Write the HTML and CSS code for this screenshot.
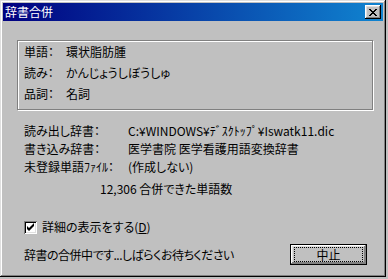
FILE: index.html
```html
<!DOCTYPE html>
<html>
<head>
    <meta charset="utf-8">
    <title>辞書合併</title>
    <link rel="stylesheet" href="styles.css">
</head>
<body>
    <div class="window">
        <div class="titlebar">
            <span class="title">辞書合併</span>
            <div class="close-button">
                <svg width="8" height="7" viewBox="0 0 8 7">
                    <path d="M0 0h2v1h1v1h2v-1h1v-1h2v1h-1v1h-1v1h-1v1h1v1h1v1h1v1h-2v-1h-1v-1h-2v1h-1v1h-2v-1h1v-1h1v-1h1v-1h-1v-1h-1v-1h-1z" fill="#000"/>
                </svg>
            </div>
        </div>
        <div class="content">
            <div class="group-box">
                <div class="row"><span class="key">単語：</span><span>環状脂肪腫</span></div>
                <div class="row"><span class="key">読み：</span><span>かんじょうしぼうしゅ</span></div>
                <div class="row"><span class="key">品詞：</span><span>名詞</span></div>
            </div>
            <div class="info">
                <div class="line"><span class="label">読み出し辞書：</span><span>C:¥WINDOWS¥ﾃﾞｽｸﾄｯﾌﾟ¥Iswatk11.dic</span></div>
                <div class="line"><span class="label">書き込み辞書：</span><span>医学書院 医学看護用語変換辞書</span></div>
                <div class="line"><span class="label">未登録単語ﾌｧｲﾙ：</span><span>(作成しない)</span></div>
                <div class="line count">12,306 合併できた単語数</div>
                <label class="check-row">
                    <span class="checkbox">
                        <svg width="9" height="9" viewBox="0 0 9 9">
                            <path d="M1 3v3l2 2 5-5v-3l-5 5z" fill="#000"/>
                        </svg>
                    </span>
                    <span>詳細の表示をする(<u>D</u>)</span>
                </label>
            </div>
            <div class="bottom-row">
                <span class="status">辞書の合併中です...しばらくお待ちください</span>
                <button class="push-button"><span class="focus">中止</span></button>
            </div>
        </div>
    </div>
</body>
</html>
```

FILE: styles.css
```css
body {
    margin: 0;
    background-color: #c0c0c0;
    font-family: "Noto Sans CJK JP", "DejaVu Sans", sans-serif;
    font-size: 12px;
    font-feature-settings: "palt";
    color: #000;
}
.window {
    width: 386px;
    height: 277px;
    box-sizing: border-box;
    padding: 3px;
    background-color: #c0c0c0;
    box-shadow: inset -1px -1px #000, inset 1px 1px #dfdfdf, inset -2px -2px #808080, inset 2px 2px #fff;
}
.titlebar {
    height: 18px;
    display: flex;
    align-items: center;
    justify-content: space-between;
    padding: 0 2px 0 2px;
    background: linear-gradient(to right, #000080, #1084d0);
    color: #fff;
}
.title {
    font-size: 12px;
    line-height: 18px;
}
.close-button {
    width: 16px;
    height: 14px;
    box-sizing: border-box;
    display: flex;
    align-items: center;
    justify-content: center;
    background-color: #c0c0c0;
    box-shadow: inset -1px -1px #000, inset 1px 1px #fff, inset -2px -2px #808080, inset 2px 2px #dfdfdf;
}
.content {
    padding: 19px 10px 0 14px;
}
.group-box {
    width: 356px;
    box-sizing: border-box;
    border: 1px solid #808080;
    box-shadow: inset 1px 1px #fff, 1px 1px #fff;
    padding: 0 0 5px 6px;
}
.row {
    display: flex;
    line-height: 21px;
}
.key {
    width: 42px;
}
.info {
    margin-top: 12px;
    padding-left: 7px;
}
.line {
    display: flex;
    line-height: 18px;
}
.label {
    width: 104px;
}
.count {
    margin-top: 4px;
    padding-left: 76px;
}
.check-row {
    display: flex;
    align-items: center;
    gap: 5px;
    margin-top: 20px;
    line-height: 18px;
}
.checkbox {
    width: 13px;
    height: 13px;
    box-sizing: border-box;
    display: flex;
    align-items: center;
    justify-content: center;
    background-color: #fff;
    box-shadow: inset 1px 1px #808080, inset -1px -1px #fff, inset 2px 2px #000, inset -2px -2px #dfdfdf;
}
.bottom-row {
    display: flex;
    align-items: center;
    justify-content: space-between;
    margin-top: 8px;
    padding: 0 6px 0 7px;
    width: 356px;
    box-sizing: border-box;
}
.status {
    letter-spacing: -0.5px;
}
.push-button {
    width: 77px;
    height: 21px;
    box-sizing: border-box;
    padding: 2px 3px;
    border: 1px solid #000;
    background-color: #c0c0c0;
    box-shadow: inset -1px -1px #808080, inset 1px 1px #fff, inset -2px -2px #808080, inset 2px 2px #dfdfdf;
    font-family: inherit;
    font-size: 12px;
    font-feature-settings: "palt";
    display: flex;
}
.focus {
    flex: 1;
    display: flex;
    align-items: center;
    justify-content: center;
    border: 1px dotted #000;
    line-height: 12px;
}
```
